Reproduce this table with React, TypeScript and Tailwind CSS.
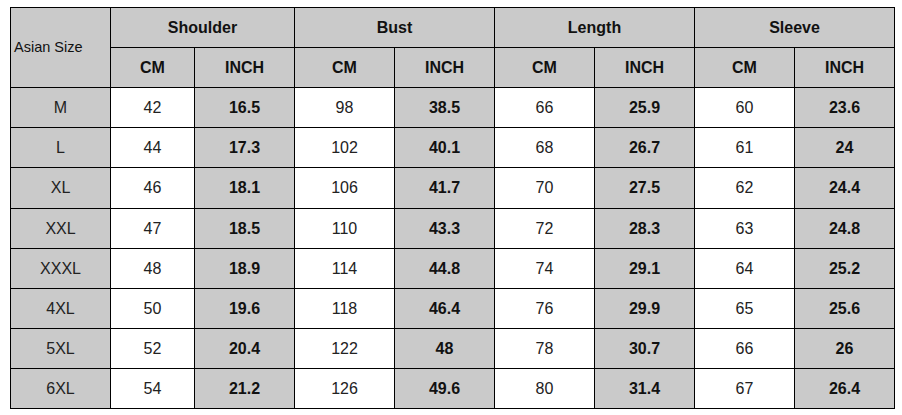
import { Fragment } from "react";

const groups = ["Shoulder", "Bust", "Length", "Sleeve"];

const rows: [string, ...number[]][] = [
    ["M", 42, 16.5, 98, 38.5, 66, 25.9, 60, 23.6],
    ["L", 44, 17.3, 102, 40.1, 68, 26.7, 61, 24],
    ["XL", 46, 18.1, 106, 41.7, 70, 27.5, 62, 24.4],
    ["XXL", 47, 18.5, 110, 43.3, 72, 28.3, 63, 24.8],
    ["XXXL", 48, 18.9, 114, 44.8, 74, 29.1, 64, 25.2],
    ["4XL", 50, 19.6, 118, 46.4, 76, 29.9, 65, 25.6],
    ["5XL", 52, 20.4, 122, 48, 78, 30.7, 66, 26],
    ["6XL", 54, 21.2, 126, 49.6, 80, 31.4, 67, 26.4],
];

const gray = "bg-[#cacaca]";

export default function App() {
    return (
        <div className="w-[902px] h-[415px] bg-white pl-[10px] pt-[7px] font-['Liberation_Sans',Arial,sans-serif] text-[#111]">
            <div className="grid w-fit grid-cols-[99px_83px_repeat(7,99px)] grid-rows-[39px_39px_39px_39px_40px_39px_39px_39px_39px_39px] gap-px bg-black p-px">
                {/* header */}
                <div className={`${gray} row-span-2 flex items-center pl-[3px] text-[14.5px]`}>Asian Size</div>
                {groups.map((g) => (
                    <div key={g} className={`${gray} col-span-2 flex items-center justify-center text-[16px] font-bold`}>
                        {g}
                    </div>
                ))}
                {groups.map((g) => (
                    <Fragment key={g}>
                        <div className={`${gray} flex items-center justify-center text-[16px] font-bold`}>CM</div>
                        <div className={`${gray} flex items-center justify-center text-[16px] font-bold`}>INCH</div>
                    </Fragment>
                ))}

                {/* body */}
                {rows.map((r) => (
                    <Fragment key={r[0]}>
                        <div className={`${gray} flex items-center justify-center text-[16px] text-[#222]`}>{r[0]}</div>
                        {r.slice(1).map((v, i) =>
                            i % 2 === 0 ? (
                                <div key={i} className="bg-white flex items-center justify-center text-[16px] text-[#222]">{v}</div>
                            ) : (
                                <div key={i} className={`${gray} flex items-center justify-center text-[16px] font-bold`}>{v}</div>
                            )
                        )}
                    </Fragment>
                ))}
            </div>
        </div>
    );
}
